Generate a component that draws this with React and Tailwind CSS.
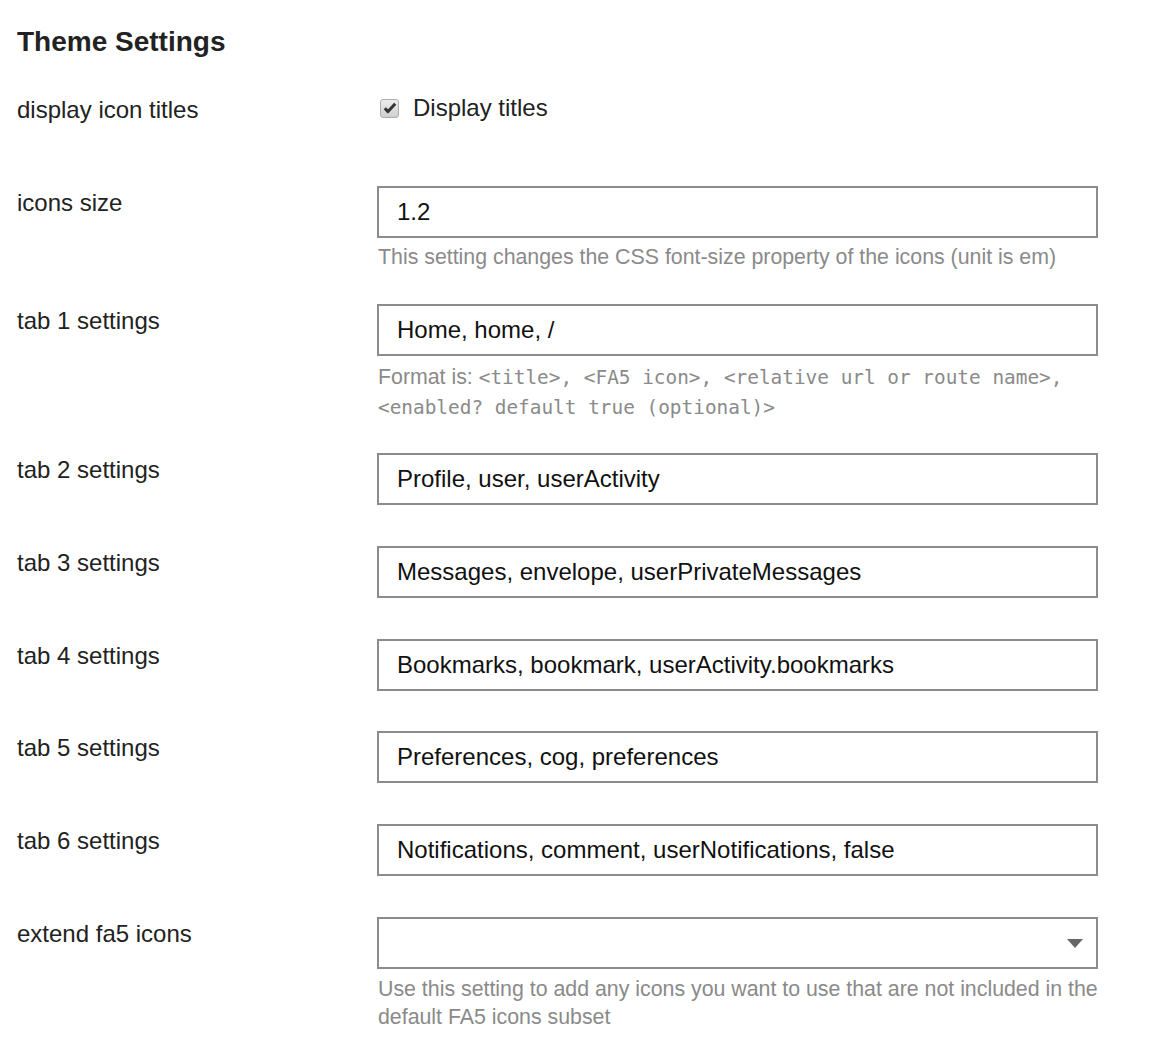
import React from "react";

const sans = { fontFamily: '"Liberation Sans", Arial, sans-serif' };

function Label({ children }) {
  return (
    <div className="w-[360px] shrink-0 text-[24px] leading-[34px] text-[#222]">{children}</div>
  );
}

function TextBox({ value, select }) {
  return (
    <div className="relative h-[52px] w-[721px] border-2 border-[#8c8c8c] bg-white pl-[18px] flex items-center text-[24px] text-[#111]">
      <span>{value}</span>
      {select && (
        <svg className="absolute right-[13px] top-[20px]" width="16" height="9" viewBox="0 0 16 9">
          <path d="M0 0 L16 0 L8 9 Z" fill="#666" />
        </svg>
      )}
    </div>
  );
}

function Help({ children, className = "" }) {
  return <div className={`text-[21.33px] leading-[28px] text-[#8a8a8a] ${className}`}>{children}</div>;
}

const Code = ({ children }) => (
  <code className="text-[19.4px] leading-[20px] text-[#8a8a8a]" style={{ fontFamily: '"DejaVu Sans Mono", "Liberation Mono", monospace' }}>
    {children}
  </code>
);

export default function App() {
  const tabs = [
    ["tab 2 settings", "Profile, user, userActivity", "mb-[41px]"],
    ["tab 3 settings", "Messages, envelope, userPrivateMessages", "mb-[41px]"],
    ["tab 4 settings", "Bookmarks, bookmark, userActivity.bookmarks", "mb-[40px]"],
    ["tab 5 settings", "Preferences, cog, preferences", "mb-[41px]"],
    ["tab 6 settings", "Notifications, comment, userNotifications, false", "mb-[41px]"],
  ];
  return (
    <div className="min-h-[1055px] w-[1151px] bg-white pl-[17px] pt-[25px]" style={sans}>
      <h1 className="text-[28px] font-bold leading-[34px] text-[#222]">Theme Settings</h1>

      <div className="mt-[34px] flex mb-[59px]">
        <Label>display icon titles</Label>
        <div className="flex items-center h-[30px] pl-[3px]">
          <span className="flex h-[19px] w-[19px] items-center justify-center rounded-[3px] border border-[#adadad] bg-gradient-to-b from-[#ececec] to-[#cfcfcf]">
            <svg width="14" height="12" viewBox="0 0 14 12">
              <path d="M1.8 6.2 L5 9.6 L12.2 1.8" fill="none" stroke="#333" strokeWidth="3" strokeLinejoin="round" />
            </svg>
          </span>
          <span className="ml-[14px] text-[24px] leading-[30px] text-[#222]">Display titles</span>
        </div>
      </div>

      <div className="flex mb-[33px]">
        <Label>icons size</Label>
        <div>
          <TextBox value="1.2" />
          <Help className="mt-[5px] pl-[1px]">This setting changes the CSS font-size property of the icons (unit is em)</Help>
        </div>
      </div>

      <div className="flex mb-[31px]">
        <Label>tab 1 settings</Label>
        <div className="w-[721px]">
          <TextBox value="Home, home, /" />
          <div className="mt-[6px] pl-[1px] text-[21.33px] leading-[30px] text-[#8a8a8a]">
            <div className="h-[30px]">
              Format is: <Code>&lt;title&gt;, &lt;FA5 icon&gt;, &lt;relative url or route name&gt;,</Code>
            </div>
            <div className="h-[30px]">
              <Code>&lt;enabled? default true (optional)&gt;</Code>
            </div>
          </div>
        </div>
      </div>

      {tabs.map(([l, v, mb]) => (
        <div key={l} className={`flex ${mb}`}>
          <Label>{l}</Label>
          <TextBox value={v} />
        </div>
      ))}

      <div className="flex">
        <Label>extend fa5 icons</Label>
        <div className="w-[721px]">
          <TextBox value="" select />
          <Help className="mt-[6px] pl-[1px]">
            Use this setting to add any icons you want to use that are not included in the default FA5 icons subset
          </Help>
        </div>
      </div>
    </div>
  );
}
